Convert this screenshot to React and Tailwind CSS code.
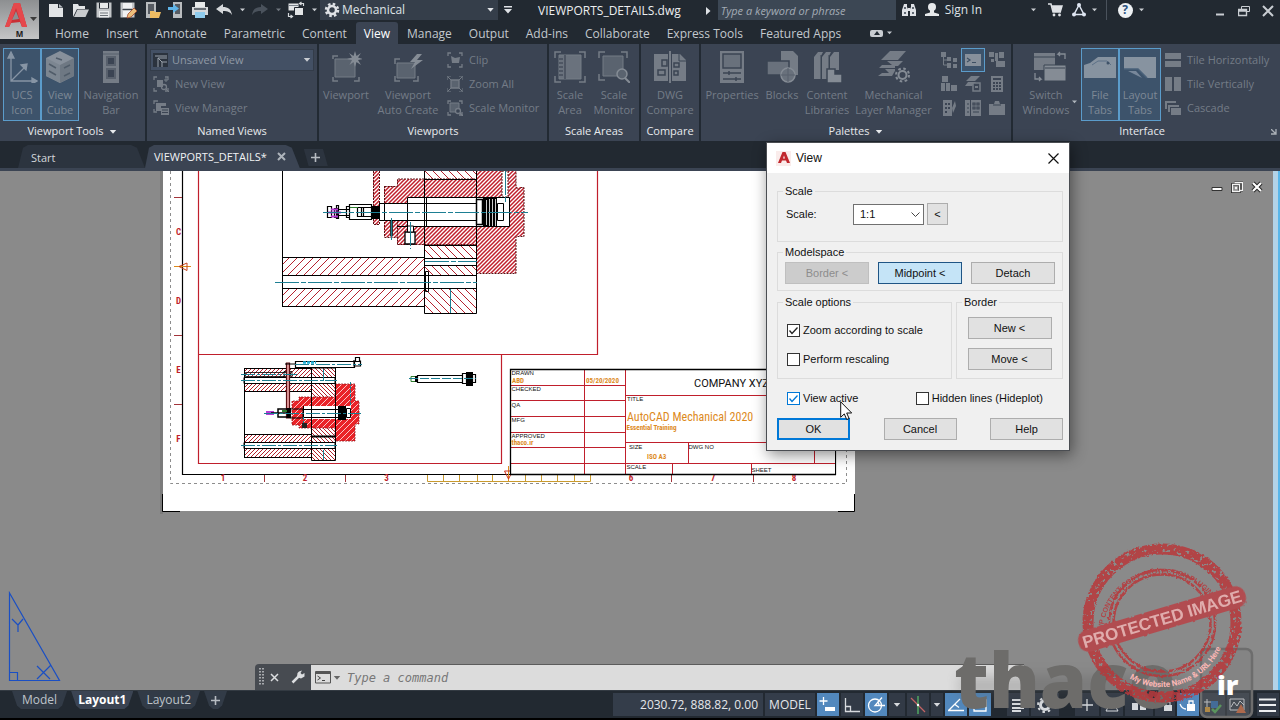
import React from "react";

const ui = "font-['Open_Sans','Noto_Sans',sans-serif]";

function Caret({ className = "w-[8px]" }) {
  return (
    <svg viewBox="0 0 8 5" className={"h-[4px] shrink-0 " + className} aria-hidden="true">
      <path d="M0 0h8L4 4.6z" fill="currentColor" />
    </svg>
  );
}

function Svg({ size = "h-8 w-8", box = "0 0 32 32", children, className = "" }) {
  return (
    <svg viewBox={box} className={"shrink-0 " + size + " " + className} fill="none" stroke="none" aria-hidden="true">
      {children}
    </svg>
  );
}

/* ---------- quick access toolbar ---------- */

const quick = [
  ["New", <g key="a"><path d="M2 3h9v4h5v9H2z" fill="#e2e4e6" /><path d="M12 3l4 3.500h-4z" fill="#b9bdc2" /></g>],
  ["Open", <g key="b"><path d="M2 16V3h5l1 2h6v3H6z" fill="#e2e4e6" /><path d="M6.500 8.500H18L14.500 16H3z" fill="#c9cccf" /></g>],
  ["Save", <g key="c"><path d="M1.500 1.500h15v15h-15z" fill="#c3c6c9" /><path d="M4 1.500h10v6H4z" fill="#20262e" /><path d="M5 2h8v5H5zM4 10h10v6.500H4z" fill="#e8eaeb" /><path d="M5 12h8M5 14.500h8" stroke="#6c7278" /></g>],
  ["Save As", <g key="d"><path d="M1.500 1.500h14v15h-14z" fill="#c3c6c9" /><path d="M4 2h9v5H4zM4 10h9v6H4z" fill="#f0f1f2" /><path d="M3.500 8.500h11" stroke="#3a414a" /><path d="M8 17l1-4 6-6 3 3-6 6z" fill="#eec07c" stroke="#a3472d" strokeWidth=".8" /></g>],
  ["Open from mobile", <g key="e"><path d="M3 1h10v16H3z" fill="#b9bcbf" /><path d="M5 3h6v10H5z" fill="#565b62" /><path d="M7 10h4l1 1h6l-2 6H7z" fill="#f0bd62" /></g>],
  ["Save to mobile", <g key="f"><path d="M6 1h9v16H6z" fill="#b9bcbf" /><path d="M8 3h5v10H8z" fill="#565b62" /><path d="M1 6h5V3l6 4.500L6 12V9H1z" fill="#5fb4e8" /></g>],
  ["Plot", <g key="g"><path d="M4 1h10v5H4z" fill="#e8eaeb" /><path d="M1 6h16v8H1z" fill="#d4d7da" /><path d="M3 8h12" stroke="#444b53" strokeWidth="1.500" /><path d="M4 11h10v6H4z" fill="#8ecbed" /></g>],
  ["Undo", <path key="h" d="M1 8l7-5v3c5 0 8 2 9 8-2-3-4-4-9-4v3z" fill="#d6d9dc" />],
];

function QuickButton({ label, children, width = "w-6 justify-center" }) {
  return (
    <button type="button" aria-label={label} className={"flex h-5 shrink-0 items-center text-[#c9cdd2] " + width}>
      {children}
    </button>
  );
}

function TitleBar() {
  return (
    <div className="flex h-[22px] items-start text-[12px]">
      <div className="flex shrink-0">
        {quick.map(([label, art]) => (
          <QuickButton key={label} label={label}>
            <Svg size="h-[18px] w-[18px]" box="0 0 18 18">{art}</Svg>
          </QuickButton>
        ))}
        <QuickButton label="Undo list" width="w-3 justify-center"><Caret className="w-[5px]" /></QuickButton>
        <QuickButton label="Redo">
          <Svg size="h-[18px] w-[18px]" box="0 0 18 18"><path d="M17 8l-7-5v3c-5 0-8 2-9 8 2-3 4-4 9-4v3z" fill="#4a525c" /></Svg>
        </QuickButton>
        <QuickButton label="Redo list" width="w-3 justify-center"><Caret className="w-[5px] text-[#70777f]" /></QuickButton>
        <QuickButton label="Viewport configuration">
          <Svg size="h-[18px] w-[18px]" box="0 0 18 18">
            <path d="M1.500 2.500h10v7h-10z" fill="#e2e4e6" />
            <path d="M1.500 4.500h10" stroke="#7a828b" />
            <path d="M7.500 6.500h9v8h-9z" fill="#e2e4e6" stroke="#20262e" />
            <path d="M13 2.500h3.500V5M14.500 1l-2 1.500 2 1.500M1.500 12v3.500H5M3.500 14l2 1.500-2 1.500" stroke="#d6d9dc" strokeWidth="1.200" />
          </Svg>
        </QuickButton>
        <QuickButton label="More configurations" width="w-3 justify-center"><Caret className="w-[5px]" /></QuickButton>
      </div>
      <div className="relative flex h-5 w-[178px] shrink-0 items-center bg-[#353e4a] pl-1 text-[#dfe2e6]">
        <Svg size="h-4 w-4" box="0 0 16 16">
          <circle cx="8" cy="8" r="6" stroke="#dfe2e6" strokeWidth="2.500" strokeDasharray="2.500 2.210" />
          <circle cx="8" cy="8" r="4" stroke="#dfe2e6" strokeWidth="2.500" />
        </Svg>
        <select aria-label="Workspace" className="h-5 min-w-0 flex-1 appearance-none bg-transparent pl-[2px] text-[12px] outline-none">
          <option>Mechanical</option>
        </select>
        <Caret className="pointer-events-none absolute top-2 right-1 w-[7px]" />
      </div>
      <button type="button" aria-label="Customize toolbar" className="flex h-5 w-5 shrink-0 items-center justify-center text-[#dfe2e6]">
        <Svg size="h-2 w-2" box="0 0 8 8"><path d="M0 0h8v1.500H0zM0 3h8L4 7.500z" fill="currentColor" /></Svg>
      </button>
      <div className="flex min-w-0 flex-1 items-center justify-end">
        <h1 className="flex-1 pl-5 leading-[22px] whitespace-nowrap text-[#eceef0]">VIEWPORTS_DETAILS.dwg</h1>
        <Svg size="h-2 w-[5px]" box="0 0 5 8" className="mr-[7px]"><path d="M0 0l4.500 4L0 8z" fill="#dfe2e6" /></Svg>
      </div>
      <input aria-label="Search" placeholder="Type a keyword or phrase" className="h-5 w-[178px] shrink-0 bg-[#3c4754] pl-[3px] text-[11px] italic text-white outline-none placeholder:text-[#a3abb5]" />
      <div className="flex h-5 shrink-0 items-center text-[#dfe2e6]">
        <QuickButton label="Find" width="w-[26px] justify-center">
          <Svg size="h-4 w-4" box="0 0 16 16">
            <path d="M3 2h3v3l1 2v7H1V8zM10 2h3l2 6v6H9V7l1-2zM7 6h2v3H7z" fill="#dfe2e6" />
            <path d="M3 11h2M11 11h2M3 6h2M11 6h2" stroke="#39424e" strokeWidth="1.300" />
          </Svg>
        </QuickButton>
        <button type="button" className="flex items-center gap-[5px] pl-[2px] leading-[22px] whitespace-nowrap">
          <Svg size="h-4 w-4" box="0 0 16 16"><circle cx="8" cy="5" r="4" fill="#e6e8ea" /><path d="M6 8h4v2.500l5 1.500v2H1v-2l5-1.500z" fill="#e6e8ea" /></Svg>
          Sign In
        </button>
        <QuickButton label="Account menu" width="w-[60px] justify-end pr-[6px]"><Caret className="w-[5px]" /></QuickButton>
        <QuickButton label="App store" width="w-[26px] justify-center">
          <Svg size="h-4 w-4" box="0 0 16 16"><path d="M1 2h3l2 8h8M4.500 4H15l-1.500 5H6z" stroke="#dfe2e6" strokeWidth="1.500" /><path d="M5 4h10l-1.500 5H6z" fill="#dfe2e6" /><circle cx="7" cy="13" r="1.400" fill="#dfe2e6" /><circle cx="12.500" cy="13" r="1.400" fill="#dfe2e6" /></Svg>
        </QuickButton>
        <QuickButton label="Connect" width="w-[22px] justify-center">
          <Svg size="h-4 w-4" box="0 0 16 16"><path d="M8 3l5 9.500H3z" stroke="#dfe6f2" strokeWidth="1.500" /><circle cx="8" cy="3" r="2" fill="#dfe6f2" /><circle cx="3" cy="12.500" r="2" fill="#dfe6f2" /><circle cx="13" cy="12.500" r="2" fill="#dfe6f2" /></Svg>
        </QuickButton>
        <QuickButton label="Connect menu" width="w-2 justify-center"><Caret className="w-[5px]" /></QuickButton>
        <div className="mr-[6px] ml-2 h-5 w-px bg-[#4a525c]" />
        <QuickButton label="Help" width="w-[24px] justify-center">
          <span className="flex h-[15px] w-[15px] items-center justify-center rounded-full bg-[#eef1f4] text-[12px] font-bold text-[#2a5080]">?</span>
        </QuickButton>
        <QuickButton label="Help menu" width="w-2 justify-center"><Caret className="w-[5px]" /></QuickButton>
      </div>
      <div className="ml-[63px] flex h-[22px] shrink-0 items-center">
        <QuickButton label="Minimize"><Svg size="h-3 w-3" box="0 0 12 12"><path d="M2 9.500h8" stroke="currentColor" strokeWidth="2" /></Svg></QuickButton>
        <QuickButton label="Restore"><Svg size="h-3 w-3" box="0 0 12 12"><path d="M3.500 4V1.500h8v5H9" stroke="currentColor" /><path d="M.5 4.500h8v6h-8zM.5 6h8" stroke="currentColor" strokeWidth="1.400" /></Svg></QuickButton>
        <QuickButton label="Close"><Svg size="h-3 w-3" box="0 0 12 12"><path d="M1 1l10 10M11 1L1 11" stroke="currentColor" strokeWidth="2" /></Svg></QuickButton>
      </div>
    </div>
  );
}

const menus = ["Home", "Insert", "Annotate", "Parametric", "Content", "View", "Manage", "Output", "Add-ins", "Collaborate", "Express Tools", "Featured Apps"];

function MenuTabs() {
  return (
    <nav className="flex h-[22px] items-stretch gap-px pl-[3px] text-[12px] leading-[24px]">
      {menus.map((m) => (
        <button key={m} type="button" className={"px-2 whitespace-nowrap " + (m === "View" ? "rounded-t-[3px] bg-[#3b4453] text-white" : "text-[#c3c8ce]")}>
          {m}
        </button>
      ))}
      <button type="button" aria-label="Ribbon display" className="ml-5 flex items-center gap-1 text-[#c3c8ce]">
        <span className="flex h-[7px] w-[13px] items-center justify-center rounded-[2px] bg-[#c9cdd2]">
          <Svg size="h-[4px] w-[6px]" box="0 0 6 4"><path d="M0 4l3-4 3 4z" fill="#222a33" /></Svg>
        </span>
        <Caret className="w-[5px]" />
      </button>
    </nav>
  );
}

function AppButton() {
  return (
    <button type="button" aria-label="Application menu" className="flex h-[39px] w-[39px] shrink-0 bg-gradient-to-b from-[#8d8f91] to-[#c4c5c6]">
      <Svg size="h-[39px] w-[39px]" box="0 0 39 39">
        <path d="M5 27L14 3h6l7 24h-5l-2-5-9 1-2 4z" fill="#c92f35" />
        <path d="M14 3h6l7 24h-5L16 8l-5 15-2 4H5z" fill="#e5484c" />
        <path d="M12 20l4-9 3 8z" fill="#8d8f91" />
        <path d="M30 17h7l-3.500 4z" fill="#3b3b3b" />
        <text x="19.500" y="37" textAnchor="middle" fontSize="8" fontWeight="700" fill="#1b1b1b" fontFamily="Open Sans">M</text>
      </Svg>
    </button>
  );
}

/* ---------- ribbon ---------- */

const F = "#757c86";
const D = "#3b4453";

const art = {
  ucs: <g stroke="#8795a5" strokeWidth="1.300"><path d="M5 3v27h25M5 30L20 15" /><path d="M2 7l3-6 3 6zM26 27l5 3-5 3zM15 14l6-1-1 6z" fill="#8795a5" /></g>,
  cube: <g><path d="M16 0l14 7v18l-14 7L2 25V7z" fill="#87909b" /><path d="M16 14l14-7v18l-14 7z" fill="#6e7883" /><path d="M2 7l14 7v18L2 25z" fill="#7c8691" /><path d="M12 7l6 2M5 13l7 4M20 17l6-3M5 20l7 4M20 25l6-3" stroke="#505c69" strokeWidth="1.500" /></g>,
  nav: <g><path d="M8 0h16v32H8z" fill={F} /><path d="M12 6h8v8h-8zM12 18h8v9h-8z" fill={D} stroke="#59616d" strokeWidth="2" /><path d="M8 3h16" stroke="#59616d" /></g>,
  viewport: <g><path d="M5 8h20v18H5z" fill="#5a636f" stroke={F} /><path d="M3 8V5h5M3 26v4h5M29 26v4h-5" stroke={F} strokeWidth="1.500" /><path d="M25 0l1.500 5L31 2l-3 4.500 5 1.500-5 1 3 5-4.500-3-1.500 5-1.500-5-4 3 2.500-5-5-1 5-1.500-3-4.500 4.500 3z" fill="#858c95" /></g>,
  auto: <g><path d="M5 12h18v15H5z" fill="#5a636f" stroke={F} /><path d="M3 13V8h5M3 25v5h5M26 25v5h-5" stroke={F} strokeWidth="1.500" /><path d="M25 3l-7 8h5l-4 7 12-9h-6l5-6z" fill="#858c95" /></g>,
  scaleArea: <g><path d="M5 4h22v24H5z" fill="#6a727d" stroke={F} /><path d="M11 4v24M5 8h4M5 12h4M5 16h4M5 20h4M5 24h4" stroke="#454e5b" strokeWidth="1.500" /><path d="M1 7V1h6M25 1h6v6M1 25v6h6M31 25v6h-6" stroke={F} strokeWidth="1.500" /></g>,
  scaleMon: <g><path d="M5 5h20v20H5z" fill="#5a636f" stroke={F} /><path d="M1 7V1h6M23 1h6v6M1 23v6h6" stroke={F} strokeWidth="1.500" /><circle cx="24" cy="23" r="5" fill="#5a636f" stroke="#858c95" strokeWidth="1.500" /><path d="M27 27l5 5" stroke="#858c95" strokeWidth="2" /></g>,
  dwg: <g><path d="M0 3h14v27H0zM18 3h8l6 6v21H18z" fill={F} /><path d="M16 0v32" stroke={F} strokeWidth="2" /><path d="M8 9h5v6H8zM4 19h7v5H4zM20 12h5v4h-5zM20 20h4v4h-4z" fill={F} stroke={D} strokeWidth="1.500" /><path d="M25 3v7h7" stroke={D} /></g>,
  props: <g><path d="M4 0h24v32H4z" fill={F} /><path d="M7 3h18v14H7z" fill="#69717c" stroke={D} strokeWidth="1.500" /><path d="M7 22h18M7 28h18M13 20v4M20 26v4" stroke={D} strokeWidth="1.500" /></g>,
  blocks: <g><path d="M15 0h12l5 5v19H15z" fill={F} /><path d="M1 10h22v14H1z" fill="#69717c" stroke={D} strokeWidth="1.500" /><circle cx="22" cy="24" r="7" fill="#69717c" stroke="#858c95" strokeWidth="1.500" /><path d="M15 24h14M22 17v14" stroke="#59616d" /></g>,
  libs: <g><path d="M3 6l4-5h5l-2 4v23H3zM11 6l4-5h5l-2 4v23h-7z" fill={F} /><path d="M19 6l4-5h5v18h-9z" fill={F} /><path d="M10 4v24M18 4v24" stroke={D} /><path d="M16 18h8v5h7v9H16z" fill="#858c95" stroke={D} strokeWidth="1.500" /></g>,
  layer: <g><path d="M12 0h16l-8 9H3z" fill={F} /><path d="M9 10h16l-7 7H1l3-3h10z" fill={F} /><path d="M7 18h11l-4 7H0l4-3h7z" fill={F} /><path d="M17 15h15v17H17z" fill={D} /><circle cx="24.500" cy="24" r="4" stroke="#858c95" strokeWidth="2" /><circle cx="24.500" cy="24" r="6.500" stroke="#858c95" strokeWidth="2" strokeDasharray="2.600 2.500" /></g>,
  sw: <g><path d="M0 2h21v17H0z" fill={F} /><path d="M10 14h22v16H10z" fill="#858c95" stroke={D} /><path d="M0 6h21M11 17h20" stroke={D} /><path d="M31 8V3h-7l2-2m-2 2l2 2M1 22v6h6l-2-2m2 2l-2 2" stroke="#858c95" strokeWidth="1.300" /></g>,
  fileTab: <g><path d="M0 14l6-2 8-6h18v21H0z" fill="#8793a0" /><path d="M8 14l6-4h9l4 4" stroke="#5d7187" /><circle cx="24" cy="12" r="1.500" fill="#3f5268" /></g>,
  layTab: <g><path d="M0 6h32v21h-9l-9-9H0z" fill="#8793a0" /><path d="M0 18h14l9 9" stroke="#4a617a" strokeWidth="1.500" /><path d="M4 20h8l6 7" fill="#78879a" /></g>,
};

function Big({ icon, lines, width, on, menu }) {
  return (
    <button type="button" className={"flex h-[73px] shrink-0 flex-col items-center gap-[4px] pt-[2px] text-[11px] leading-[15px] whitespace-nowrap " + width + " " + (on ? "border border-[#5b9ccb] bg-[#3d536b] text-[#7d8996]" : "border border-transparent text-[#747c87]")}>
      <Svg>{art[icon]}</Svg>
      <span className="flex items-center">
        <span>
          {lines.map((l) => (
            <span key={l} className="block">{l}</span>
          ))}
        </span>
        {menu && <Caret className="ml-[3px] w-[5px] text-[#b0b6bd]" />}
      </span>
    </button>
  );
}

function Small({ label, children }) {
  return (
    <button type="button" className="flex h-6 items-center gap-[6px] text-[11px] whitespace-nowrap text-[#747c87]">
      <Svg size="h-4 w-4" box="0 0 16 16">{children}</Svg>
      {label}
    </button>
  );
}

function Panel({ title, width, children, menu, launcher, inner = "" }) {
  return (
    <section className={"flex flex-col border-[#222a33] bg-[#3b4453] " + width}>
      <div className={"flex h-[78px] items-start pt-1 " + inner}>{children}</div>
      <div className="flex h-[19px] items-center text-[11px] text-[#e8eaed]">
        <h2 className="flex flex-1 items-center justify-center gap-[6px] whitespace-nowrap">
          {title}
          {menu && <Caret />}
        </h2>
        {launcher && (
          <button type="button" aria-label={title + " options"}>
            <Svg size="h-[6px] w-[6px]" box="0 0 6 6" className="mr-[3px]"><path d="M0 0l5 5M5 0v5H0" stroke="#aab0b7" strokeWidth="1.300" /></Svg>
          </button>
        )}
      </div>
    </section>
  );
}

const brackets = <path d="M1 4V1h3M12 1h3v3M1 12v3h3M15 12v3h-3" stroke={F} strokeWidth="1.300" />;

const palettes = [
  ["Tool palettes", <g key="p"><path d="M0 0h5v5H0zM6 5h4v4H6zM6 11h4v5H6zM12 6h4v4h-4zM12 12h4v4h-4z" fill={F} /><path d="M2.500 5v8h4M2.500 8h4" stroke={F} /></g>],
  ["Command line", <g key="p"><path d="M0 2h16v12H0z" fill="#87909b" /><path d="M2 6l3 2-3 2M7 10.500h4" stroke="#3d4f63" strokeWidth="1.200" /></g>],
  ["Sheet set", <path key="p" d="M0 0h5v5H0zM6 1h3v8H6zM10 0h5v6h-5zM7 9h9v6H7zM2 7h3v3H2z" fill={F} />],
  ["Design center", <path key="p" d="M1 0h6v6H1zM0 7h4v8H0zM5 7h4v8H5zM10 9h6v6h-6z" fill={F} />],
  ["Layer states", <g key="p"><path d="M6 0h9l-5 5H1zM3 6h8l-4 4H0z" fill={F} /><path d="M8 7h7v8H8z" fill={D} stroke={F} strokeWidth="1.500" /><path d="M10 10h3v2h-3z" fill={F} /></g>],
  ["Calculator", <g key="p"><path d="M2 0h12v16H2z" fill={F} /><path d="M4 2h8v2H4zM4 6h2v2H4zM7 6h2v2H7zM10 6h2v2h-2zM4 9h2v2H4zM7 9h2v2H7zM10 9h2v2h-2zM4 12h2v2H4zM7 12h2v2H7zM10 12h2v2h-2z" fill={D} /></g>],
  ["Markup", <g key="p"><path d="M2 0h9v16H2z" fill={F} /><path d="M4 3h2v2H4zM7 3h2v2H7zM4 7h2v2H4zM7 7h2v2H7zM4 11h2v2H4z" fill={D} /><path d="M14 1l-3 7 1 5 3-7z" fill={F} /></g>],
  ["Parts list", <g key="p"><path d="M0 0h5v16H0zM6 0h10v16H6z" fill={F} /><path d="M2 4h2M2 8h2M2 12h2M8 3h2v2H8zM12 3h2v2h-2zM8 7h2v2H8zM12 7h2v2h-2zM8 12h6" stroke={D} strokeWidth="1.200" /></g>],
  ["Clipboard", <g key="p"><path d="M0 4h5l1-3h4l1 3h5v11H0z" fill={F} /><path d="M4 5h8" stroke={D} /></g>],
];

const edge = "border-r-2 shrink-0 ";

function Ribbon() {
  return (
    <div className="flex h-[97px] bg-[#3b4453]">
      <Panel title="Viewport Tools" width={edge + "w-[147px]"} inner="pl-[3px]" menu>
        <Big icon="ucs" lines={["UCS", "Icon"]} width="w-[38px]" on />
        <Big icon="cube" lines={["View", "Cube"]} width="w-[38px]" on />
        <Big icon="nav" lines={["Navigation", "Bar"]} width="w-[64px]" />
      </Panel>
      <Panel title="Named Views" width={edge + "w-[172px]"} inner="flex-col pl-[3px] pr-[3px]">
        <div className="relative flex h-6 w-full items-start">
          <div className="mt-[1px] flex h-[22px] w-full items-center border border-[#333c49] bg-[#435064] pl-[2px] text-[#9099a4]">
            <Svg size="h-4 w-4" box="0 0 16 16"><path d="M0 1h15v14H0z" fill="#2b333e" /><path d="M2 4h12M5 15V6h9M5 6l4 4h5M9 10v5" stroke="#9aa2ab" /></Svg>
            <select aria-label="Saved view" className="h-5 min-w-0 flex-1 appearance-none bg-transparent pl-[3px] text-[11px] outline-none"><option>Unsaved View</option></select>
          </div>
          <Caret className="pointer-events-none absolute top-[10px] right-[3px] w-[8px] text-[#c9cdd2]" />
        </div>
        <div className="pl-[3px]">
          <Small label="New View">{brackets}<path d="M4 4h6v7H4z" fill={F} /><circle cx="11" cy="11" r="2.500" stroke={F} strokeWidth="1.300" /><path d="M13 2v4M11 4h4M13 13l3 3" stroke={F} /></Small>
          <Small label="View Manager"><path d="M1 4V1h4M1 9v3h3" stroke={F} strokeWidth="1.300" /><path d="M3 3h10v3H8v5H3z" fill={F} /><path d="M8 8h8v7H8z" fill={F} /><path d="M9 10h6M9 12.500h6" stroke={D} /></Small>
        </div>
      </Panel>
      <Panel title="Viewports" width={edge + "w-[230px]"}>
        <Big icon="viewport" lines={["Viewport"]} width="w-[54px]" />
        <Big icon="auto" lines={["Viewport", "Auto Create"]} width="w-[70px]" />
        <div className="pl-1">
          <Small label="Clip">{brackets}<path d="M4 4l4 2 5-1-1 6H5z" fill={F} /></Small>
          <Small label="Zoom All"><path d="M4 4h8v8H4z" fill="#5a636f" stroke={F} strokeWidth="1.300" /><path d="M1 1l3 3M15 1l-3 3M1 15l3-3M15 15l-3-3M0 4V0h4M12 0h4v4M0 12v4h4M16 12v4h-4" stroke={F} /></Small>
          <Small label="Scale Monitor">{brackets}<path d="M3 3h9v9H3z" fill="#5a636f" stroke={F} /><circle cx="11" cy="11" r="2.500" fill={D} stroke={F} strokeWidth="1.300" /><path d="M13 13l3 3" stroke={F} strokeWidth="1.500" /></Small>
        </div>
      </Panel>
      <Panel title="Scale Areas" width={edge + "w-[92px]"}>
        <Big icon="scaleArea" lines={["Scale", "Area"]} width="w-[42px]" />
        <Big icon="scaleMon" lines={["Scale", "Monitor"]} width="w-[46px]" />
      </Panel>
      <Panel title="Compare" width={edge + "w-[60px]"}>
        <Big icon="dwg" lines={["DWG", "Compare"]} width="w-[58px]" />
      </Panel>
      <Panel title="Palettes" width={edge + "w-[312px]"} inner="pl-[3px]" menu>
        <Big icon="props" lines={["Properties"]} width="w-[56px]" />
        <Big icon="blocks" lines={["Blocks"]} width="w-[44px]" />
        <Big icon="libs" lines={["Content", "Libraries"]} width="w-[46px]" />
        <Big icon="layer" lines={["Mechanical", "Layer Manager"]} width="w-[87px]" />
        <div className="grid grid-cols-3">
          {palettes.map(([label, g]) => (
            <button key={label} type="button" aria-label={label} className={"flex h-6 w-6 items-center justify-center " + (label === "Command line" ? "border border-[#5b9ccb] bg-[#3d536b]" : "")}>
              <Svg size="h-4 w-4" box="0 0 16 16">{g}</Svg>
            </button>
          ))}
        </div>
      </Panel>
      <Panel title="Interface" width="min-w-0 flex-1" inner="pl-[6px]" launcher>
        <Big icon="sw" lines={["Switch", "Windows"]} width="w-[62px]" menu />
        <Big icon="fileTab" lines={["File", "Tabs"]} width="w-[38px]" on />
        <Big icon="layTab" lines={["Layout", "Tabs"]} width="w-[42px]" on />
        <div className="pl-1">
          <Small label="Tile Horizontally"><path d="M0 1h16v6H0zM0 9h16v6H0z" fill={F} /></Small>
          <Small label="Tile Vertically"><path d="M0 1h7v14H0zM9 1h7v14H9z" fill={F} /></Small>
          <Small label="Cascade"><path d="M0 1h11v2H2v6H0zM3 5h11v2H5v5H3z" fill={F} /><path d="M6 8h10v7H6z" fill={F} /></Small>
        </div>
      </Panel>
    </div>
  );
}

function FileTabs() {
  return (
    <div className="flex h-[30px] flex-col bg-[#222931] pt-1">
      <div className="flex h-[23px] items-stretch pl-[18px] text-[11px] leading-[25px]">
        <button type="button" className="w-[127px] bg-[#2c343f] pl-[13px] text-left text-[#d3d7dc] [clip-path:polygon(0_100%,5px_12%,10px_0,113px_0,119px_12%,100%_100%)]">Start</button>
        <div className="flex items-center gap-[10px] bg-[#3b4453] pr-[14px] pl-[9px] text-[#f0f2f4] [clip-path:polygon(0_100%,4px_12%,9px_0,calc(100%-14px)_0,calc(100%-8px)_12%,100%_100%)]">
          <button type="button">VIEWPORTS_DETAILS*</button>
          <button type="button" aria-label="Close tab"><Svg size="h-[9px] w-[9px]" box="0 0 9 9"><path d="M1 1l7 7M8 1L1 8" stroke="#aeb4bb" strokeWidth="2" /></Svg></button>
        </div>
        <button type="button" aria-label="New tab" className="mt-1 ml-1 flex h-[17px] w-[24px] items-center justify-center bg-[#2c343f] [clip-path:polygon(0_0,80%_0,100%_100%,20%_100%)]">
          <Svg size="h-[9px] w-[9px]" box="0 0 9 9"><path d="M4.500 0v9M0 4.500h9" stroke="#b7bcc2" strokeWidth="1.600" /></Svg>
        </button>
      </div>
      <div className="h-[3px] bg-[#3b4453]" />
    </div>
  );
}

/* ---------- drawing sheet ---------- */

const R = "#c01f2c";
const T = "#1d7f93";
const O = "#dd8a1c";
const narrow = "Roboto Condensed, Roboto, sans-serif";

/* Diagonal strokes clipped to a rectangle; "/" by default, "\" with back. */
function Lines({ id, x, y, w, h, gap, back }) {
  const parts = [];
  for (let i = -h; i < w; i += gap) {
    parts.push(back ? `M${x + i} ${y}l${h} ${h}` : `M${x + i} ${y + h}l${h} ${-h}`);
  }
  return (
    <g>
      <clipPath id={id}>
        <rect x={x} y={y} width={w} height={h} />
      </clipPath>
      <path d={parts.join("")} stroke="#b5222e" clipPath={`url(#${id})`} />
    </g>
  );
}

function Hatch({ id, size, width = 1, color = R }) {
  return (
    <pattern id={id} width={size} height={size} patternUnits="userSpaceOnUse">
      <path
        d={`M0 ${size}L${size} 0M-1 1L1 -1M${size - 1} ${size + 1}L${size + 1} ${size - 1}`}
        stroke={color}
        strokeWidth={width}
        fill="none"
      />
    </pattern>
  );
}

const plates = [
  ["p1", 282, 257, 142, 18, 8], ["p2", 282, 288, 142, 18, 8],
  ["p3", 425, 171, 52, 8, 8, true], ["p4", 425, 245, 52, 13, 8, true], ["p5", 425, 265, 52, 10, 8, true], ["p6", 425, 288, 52, 25, 8, true],
];

const smallPlates = [
  ["s1", 244, 368, 67, 9, 4], ["s2", 244, 384, 67, 7, 4], ["s3", 244, 435, 67, 7, 4], ["s4", 244, 448, 67, 9, 4],
  ["s5", 311, 368, 24, 92, 4, true],
];

function Sheet() {
  return (
    <svg viewBox="160 171 698 343" className="absolute top-0 left-[160px] h-[343px] w-[698px]" fill="none" role="img" aria-label="Layout sheet">
      <defs>
        <Hatch id="hatch-dense" size={4} width={1.5} />
        <Hatch id="hatch-light" size={6} width={1} color="#fff" />
      </defs>
      <path d="M160 171h3v343h-3z" fill="#7b7b7b" />
      <path d="M163 171h692v340H163z" fill="#fff" />
      <path d="M162.500 494v17.500H180M838 511.500h16.500V494" stroke="#000" />
      <path d="M170.500 171v312.500h676V171" stroke="#8d8d8d" strokeDasharray="3 3" />
      <path d="M182.500 171v303.500h653V171" stroke="#000" strokeWidth="1.200" />
      <path d="M174 197.500h8M174 335.500h8M174 404.500h8M264.500 475v7M345.500 475v7M671.500 475v7M753.500 475v7" stroke="#a3343a" />
      <path d="M198.500 171v292.500h303V354.500M198.500 354.500H597.500V171" stroke={R} strokeWidth="1.200" />
      <path d="M174 266.500h17" stroke={O} />
      <path d="M187 263v7.500l-8-4z" stroke="#c5451c" />
      <path d="M508.500 466v16" stroke={O} />
      <path d="M504.500 471h8l-4 8z" stroke="#d0301c" />
      <path d="M427.500 475v6.500h163V475M443.500 475v6M459.500 475v6M477.500 475v6M492.500 475v6M525.500 475v6M541.500 475v6M557.500 475v6M574.500 475v6" stroke="#c99a2e" />
      <g fill={R} fontFamily={narrow} fontSize="9" fontWeight="700" textAnchor="middle">
        <text x="178.500" y="235">C</text><text x="178.500" y="304">D</text><text x="178.500" y="373">E</text><text x="178.500" y="442">F</text>
        <text x="223" y="481">1</text><text x="305" y="481">2</text><text x="386.500" y="481">3</text>
        <text x="631" y="481">6</text><text x="713" y="481">7</text><text x="794" y="481">8</text>
      </g>

      {/* main assembly */}
      {plates.map(([id, x, y, w, h, gap, back]) => (
        <Lines key={id} id={id} x={x} y={y} w={w} h={h} gap={gap} back={back} />
      ))}
      <path d="M397 179h80v18h-80zM397 226h80v19h-80zM384 186h13v18h-13zM384 220h13v17h-13zM397 197h10v7h-10zM397 220h10v7h-10zM476 171h40v16h8v49h-8v37h-40zM373 171h6v54h-6z" fill="url(#hatch-dense)" />
      <path d="M397.500 244.500V220M384.500 237.500h13M384.500 186v51M384.500 186.500h13v-7.500h79M397.500 244.500h79M476.500 273.500h39.500v-37h8v-49h-3l-2 2-3-2V171M373.500 171v53.500h6V171" stroke="#5a1015" strokeDasharray="2 1" />
      <path d="M407 197h102v29H407z" fill="#fff" />
      <path d="M502 171h6v26h-6z" fill="#fff" stroke="#5a1015" strokeDasharray="2 1" />
      <path d="M282.500 171v135.500M282 257.500h142M282 275.500h195M282 288.500h195M282 306.500h142M424.500 171v142.500h52V171M424.500 179.500h52M424.500 245.500h52M424.500 258.500h52M424.500 265.500h52M425.500 271.500h3v20h-3z" stroke="#000" />
      <path d="M407.500 226V197.500H509.500V226.500H397M379 203.500h97M379 220.500h97M424.500 197v29M426.500 197v29" stroke="#000" />
      <path d="M476.500 199.500h6v25h-6z" stroke="#000" strokeWidth="1.500" />
      <path d="M483 198h14v29h-14z" fill="#000" />
      <path d="M486.500 200v25M489.500 199v27M492.500 199v27M495.500 199v27" stroke="#fff" strokeWidth=".8" />
      <path d="M497.500 203.500h6v17h-6z" stroke="#000" />
      <path d="M405 232h10v12h-10z" fill="#fff" stroke="#000" strokeWidth="1.300" />
      <path d="M407.500 226h6v6h-6z" fill="#fff" stroke="#000" />
      <path d="M327.500 206.500h4v11h-4zM334.500 208.500h3v9h-3zM336.500 205.500h2v13h-2zM339 209.500h10M339 215.500h10M346.500 206.500h3v11h-3zM349.500 204.500h22v15h-22zM357.500 207.500h14v9h-14zM361.500 207.500v9M363.500 207.500v9" stroke="#000" strokeWidth="1.200" />
      <path d="M350 207.500h8" stroke="#2d7d2d" />
      <path d="M328 212.500h13M331 216.500h7M331 209.500h7" stroke="#b63bd6" strokeWidth="1.800" />
      <path d="M372 206h7v13h-7z" fill="#000" />
      <path d="M379.500 203.500h5v17h-5z" fill="#fff" stroke="#000" />
      <path d="M323 212.500h205M275 282.500h202M425 261.500h52M450.500 289v24M410.500 222v27M391.500 218v22M505.500 171v31" stroke={T} strokeDasharray="24 2 5 2" />
      <path d="M390.500 221v15M392.500 221v15" stroke="#333" />

      {/* scaled copy */}
      {smallPlates.map(([id, x, y, w, h, gap, back]) => (
        <Lines key={id} id={id} x={x} y={y} w={w} h={h} gap={gap} back={back} />
      ))}
      <path d="M335 384h20v17h4v23h-4v17h-20v-13h-36v-3h-7v-24h7v-4h36z" fill="#ea2328" />
      <path d="M335 384h20v17h4v23h-4v17h-20v-13h-36v-3h-7v-24h7v-4h36z" fill="url(#hatch-light)" stroke="#8e151a" strokeDasharray="2 1" opacity=".75" />
      <path d="M303 406h48v13h-48z" fill="#fff" />
      <path d="M245 378h90v5h-90zM245 443h90v5h-90z" fill="#fff" />
      <path d="M244.500 368v89M244 368.500h67M244 377.500h91v6H244zM244 391.500h67M244 434.500h67M244 442.500h91v6H244zM244 457.500h67M311.500 368v92.500h24V368h-24M303.500 406v13M303 409.500h35M303 417.500h35M290 409h13v9h-13z" stroke="#000" />
      <path d="M245.500 372.500h45v4h-45zM284 371.500h8v6h-8z" stroke="#000" strokeWidth=".8" />
      <path d="M312 436.500h23" stroke="#000" strokeWidth="2" />
      <path d="M338 406h8v14h-8z" fill="#000" />
      <path d="M346.500 408.500h4v9h-4z" fill="#fff" stroke="#000" />
      <path d="M286.500 363v55h3v-55z" fill="#e7a0a2" stroke="#5b0e12" strokeWidth="1.200" />
      <path d="M285 364h10M295.500 361.500h59v6h-59zM354 360v6h6.500v-5.500M355.500 357.500h4v4h-4z" stroke="#000" strokeWidth="1.200" />
      <path d="M303 362.500h13" stroke="#22b4dd" strokeWidth="2.500" strokeDasharray="3 1" />
      <path d="M350.500 382v23M303.500 417v12" stroke={T} strokeDasharray="3 1" />
      <path d="M266 411h8v4h-8z" fill="#b63bd6" />
      <path d="M271 413h20M278 409v8h12v-8z" stroke="#000" strokeWidth="1.500" />
      <path d="M282 410h6v2h-6z" fill="#2d7d2d" />
      <path d="M287 408h4v10h-4z" fill="#000" />
      <path d="M302 423h5v5h-5z" fill="#222" />
      <path d="M264 413.500h97M241 380.500h96M241 445.500h96M241 374.500h56M295 364.500h67M323.500 369v12M323.500 450v10" stroke={T} strokeDasharray="14 2 3 2" />

      {/* detached pin */}
      <path d="M411 376.500h6v5h-6z" stroke="#2d7d2d" fill="#fff" />
      <path d="M415 376h3v6h-3z" fill="#000" />
      <path d="M417.500 375.500h45v7h-45zM462.500 373.500h4v10h-4zM472.500 374.500h3v8h-3z" stroke="#000" strokeWidth="1.200" fill="#fff" />
      <path d="M466 372h7v14h-7z" fill="#000" />
      <path d="M409 378.500h67" stroke={T} strokeDasharray="9 2" />

      {/* title block */}
      <path d="M511 370h324v104H511z" fill="#fff" />
      <path d="M584.500 370v104M625.500 370v104M511 385.500h114M511 400.500h114M511 416.500h114M511 432.500h114M511 447.500h114M511 463.500h324M625 395.500h210M625 442.500h210M688.500 442v21M672.500 463v11M751.500 463v11M814.500 442v21" stroke={R} />
      <path d="M510.500 474V369.500h325M510 474.500h326" stroke="#000" strokeWidth="1.300" />
      <g fill="#111" fontFamily="Liberation Sans" fontSize="6">
        <text x="511.500" y="375">DRAWN</text><text x="511.500" y="391">CHECKED</text><text x="511.500" y="407">QA</text><text x="511.500" y="422">MFG</text><text x="511.500" y="438">APPROVED</text>
        <text x="627" y="401">TITLE</text><text x="629" y="449">SIZE</text><text x="688.500" y="449">DWG NO</text><text x="626.500" y="469">SCALE</text><text x="751.500" y="472">SHEET</text>
      </g>
      <text x="694" y="387" fontSize="11" fill="#111" fontFamily="Roboto">COMPANY XYZ</text>
      <g fill={O} fontFamily={narrow} fontWeight="700" fontSize="7">
        <text x="512" y="383">ABD</text><text x="586" y="383">05/20/2020</text><text x="511.500" y="445">thaco.ir</text>
        <text x="626.500" y="430">Essential Training</text><text x="647" y="459">ISO A3</text>
      </g>
      <text x="627" y="421" fill={O} fontFamily={narrow} fontSize="12">AutoCAD Mechanical 2020</text>
    </svg>
  );
}

/* ---------- dialog ---------- */

const dlgButton = "flex h-[22px] items-center justify-center text-[11px] whitespace-nowrap ";

function Push({ children, width, tone = "border border-[#adadad] bg-[#e1e1e1] text-[#111]", disabled }) {
  return (
    <button type="button" disabled={disabled} className={dlgButton + width + " " + tone}>{children}</button>
  );
}

function Tick({ label, checked, blue }) {
  return (
    <label className="flex items-center gap-[3px] text-[11px] whitespace-nowrap">
      <span className="grid h-[13px] w-[13px] place-items-center">
        <input type="checkbox" defaultChecked={checked} className={"col-start-1 row-start-1 h-[13px] w-[13px] appearance-none border bg-white " + (blue ? "border-[#0078d7]" : "border-[#333]")} />
        {checked && (
          <Svg size="h-[11px] w-[11px]" box="0 0 11 11" className="pointer-events-none col-start-1 row-start-1">
            <path d="M1.500 5.500L4 8.500l5.500-6" stroke={blue ? "#0078d7" : "#222"} strokeWidth="1.300" />
          </Svg>
        )}
      </span>
      {label}
    </label>
  );
}

function Group({ title, className, children }) {
  return (
    <fieldset className={"min-w-0 border border-[#dcdcdc] " + className}>
      <legend className="ml-[5px] px-[2px] text-[11px] leading-[14px]">{title}</legend>
      {children}
    </fieldset>
  );
}

function ViewDialog() {
  return (
    <div role="dialog" aria-label="View" className="absolute top-[142px] left-[766px] flex w-[304px] flex-col border border-[#4a4d52] bg-[#f0f0f0] font-['Liberation_Sans',Arial,sans-serif] text-[#111] shadow-[2px_4px_14px_rgba(0,0,0,0.45)]">
      <div className="flex h-[30px] items-center bg-white pr-[6px] pl-[9px]">
        <span className="flex h-[15px] w-[15px] items-center justify-center bg-[#faeceb]">
          <Svg size="h-[12px] w-[12px]" box="0 0 12 12"><path d="M0 11L4.500 0h3L12 11H9L8 8.500H4L3 11z" fill="#c1272d" /><path d="M5 6.500L6 3.500l1 3z" fill="#faeceb" /></Svg>
        </span>
        <h2 className="flex-1 pl-[5px] text-[12px]">View</h2>
        <button type="button" aria-label="Close dialog" className="p-1">
          <Svg size="h-[11px] w-[11px]" box="0 0 11 11"><path d="M.5.5l10 10M10.500.5l-10 10" stroke="#111" strokeWidth="1.200" /></Svg>
        </button>
      </div>
      <div className="flex flex-col pt-[11px] pr-[6px] pb-[10px] pl-[10px]">
        <Group title="Scale" className="h-[58px]">
          <div className="flex items-center pt-[5px] pl-[8px] text-[11px]">
            <label htmlFor="scale" className="w-[67px]">Scale:</label>
            <div className="relative flex">
              <select id="scale" className="h-[21px] w-[71px] appearance-none border border-[#707070] bg-white pl-[6px] text-[11px]"><option>1:1</option></select>
              <Svg size="h-[6px] w-[9px]" box="0 0 9 6" className="pointer-events-none absolute top-2 right-1"><path d="M.5.5l4 4 4-4" stroke="#444" /></Svg>
            </div>
            <Push width="ml-[3px] w-[21px]">&lt;</Push>
          </div>
        </Group>
        <Group title="Modelspace" className="mt-[3px] h-[46px]">
          <div className="flex justify-between px-[7px] pt-[3px]">
            <Push width="w-[84px]" tone="border border-[#bfbfbf] bg-[#cccccc] text-[#8d8d8d]" disabled>Border &lt;</Push>
            <Push width="w-[84px]" tone="border border-[#1f5585] bg-[#c5e4f7] text-[#111]">Midpoint &lt;</Push>
            <Push width="w-[84px]">Detach</Push>
          </div>
        </Group>
        <div className="mt-[4px] flex gap-[4px]">
          <Group title="Scale options" className="h-[84px] flex-1">
            <div className="flex flex-col items-start gap-[14px] pt-[14px] pl-[9px] leading-[15px]">
              <Tick label="Zoom according to scale" checked />
              <Tick label="Perform rescaling" />
            </div>
          </Group>
          <Group title="Border" className="h-[84px] w-[107px]">
            <div className="flex flex-col items-center gap-[9px] pt-[8px]">
              <Push width="w-[84px]">New &lt;</Push>
              <Push width="w-[84px]">Move &lt;</Push>
            </div>
          </Group>
        </div>
        <div className="mt-[12px] flex justify-between pr-5 pl-[10px] leading-[15px]">
          <Tick label="View active" checked blue />
          <Tick label="Hidden lines (Hideplot)" />
        </div>
        <div className="mt-[12px] flex justify-between">
          <Push width="w-[73px]" tone="border-2 border-[#0078d7] bg-[#e1e1e1] text-[#111]">OK</Push>
          <Push width="w-[73px]">Cancel</Push>
          <Push width="w-[73px]">Help</Push>
        </div>
      </div>
    </div>
  );
}

/* ---------- canvas furniture ---------- */

function McButton({ label, children }) {
  return (
    <button type="button" aria-label={label}>
      <Svg size="h-3 w-3" box="0 0 12 12">{children}</Svg>
    </button>
  );
}

function Workspace() {
  return (
    <main className="relative flex min-h-0 flex-1 flex-col overflow-hidden bg-[#8a8a8a]">
      <Sheet />
      <div className="flex justify-end gap-2 pt-[10px] pr-[17px]">
        <McButton label="Minimize drawing"><path d="M1 6.500h10v3H1z" fill="#fff" stroke="#333" /></McButton>
        <McButton label="Restore drawing"><path d="M3.500 1.500h8v8h-3M.5 3.500h8v8h-8z" stroke="#222" strokeWidth="2.500" /><path d="M3.500 1.500h8v8h-3M1.500 3.500h7v7h-7zM4.500 6.500h1v1h-1z" stroke="#f4f4f4" strokeWidth="1.300" /></McButton>
        <McButton label="Close drawing"><path d="M2 2l8 8M10 2l-8 8" stroke="#222" strokeWidth="4" /><path d="M2 2l8 8M10 2l-8 8" stroke="#fff" strokeWidth="2.200" /></McButton>
      </div>
      <svg viewBox="0 0 60 96" className="absolute bottom-[6px] left-[4px] h-[96px] w-[60px]" fill="none" stroke="#1a4fc4" strokeWidth="1.200" aria-hidden="true">
        <path d="M5.500 5v87.500H55.500zM5.500 84.500h8v8M8 31l6 6 5-6M14 37v7M33 78l13 13M47 77L33 91" />
      </svg>
      <div className="mt-auto mr-[256px] ml-[255px] flex h-[26px] items-stretch rounded-tl bg-[#474b51]">
        <Svg size="h-[18px] w-[5px]" box="0 0 5 18" className="my-auto ml-1"><path d="M1 0v18M4 0v18" stroke="#c6c9cc" strokeWidth="1.500" strokeDasharray="1.500 1.500" /></Svg>
        <button type="button" aria-label="Close command line" className="flex w-5 items-center justify-center"><Svg size="h-[9px] w-[9px]" box="0 0 9 9"><path d="M1 1l7 7M8 1L1 8" stroke="#dcdee0" strokeWidth="1.500" /></Svg></button>
        <button type="button" aria-label="Customize" className="flex w-[27px] items-center justify-center"><Svg size="h-[14px] w-[14px]" box="0 0 14 14"><path d="M1.500 12.500L8 6" stroke="#dcdee0" strokeWidth="2.500" /><path d="M8 1.500L11 .5 9.500 3l1.500 1.500L13.500 3v3.500L10 8.500 6 7 6.500 3z" fill="#dcdee0" /></Svg></button>
        <div className="flex min-w-0 flex-1 items-center border-t border-[#5c5c5c] bg-[#dcdcdc] pl-1">
          <Svg size="h-[13px] w-4" box="0 0 16 13"><path d="M.5.500h15v11.500H.5z" stroke="#555" /><path d="M1 2h14" stroke="#555" strokeWidth="2" /><path d="M2.500 5l3 2-3 2M7 9.500h3" stroke="#444" /></Svg>
          <Caret className="ml-[2px] w-[8px] text-[#666]" />
          <input aria-label="Command" placeholder="Type a command" className="ml-[6px] h-6 min-w-0 flex-1 bg-transparent font-['DejaVu_Sans_Mono',monospace] text-[12px] italic outline-none placeholder:text-[#777]" />
        </div>
      </div>
      <div className="absolute top-0 right-0 bottom-0 w-[7px] border-r-2 border-[#58b6ea] bg-[#b2d3e8]" />
    </main>
  );
}

const sheetTab = "h-[18px] [clip-path:polygon(0_0,100%_0,calc(100%-5px)_80%,calc(100%-9px)_100%,9px_100%,5px_80%)] ";

function Toggle({ label, on, width = "w-[22px]", children }) {
  return (
    <button type="button" aria-label={label} className={"flex h-[23px] shrink-0 items-center justify-center " + width + " " + (on ? "bg-[#5288bd]" : "bg-[#323a46]")}>
      <Svg size="h-[18px] w-[18px]" box="0 0 18 18">{children}</Svg>
    </button>
  );
}

const L = "#d7dade";

function MenuArrow({ label, width }) {
  return (
    <button type="button" aria-label={label} className={"flex h-[23px] shrink-0 items-center justify-center bg-[#323a46] text-[#d7dade] " + width}>
      <Caret />
    </button>
  );
}

function StatusBar() {
  return (
    <footer className="flex h-[30px] items-start border-t border-[#333a42] border-b-2 border-b-black bg-[#222931] pr-px text-[#bfc4ca]">
      <div className="flex flex-1 gap-1 pl-3 text-[12px]">
        <button type="button" className={sheetTab + "bg-[#323b47] px-[10px]"}>Model</button>
        <button type="button" className={sheetTab + "bg-[#3b4453] px-[7px] font-bold text-white"}>Layout1</button>
        <button type="button" className={sheetTab + "bg-[#323b47] px-[9px]"}>Layout2</button>
        <button type="button" aria-label="New layout" className={sheetTab + "bg-[#323b47] px-[7px]"}><Svg size="h-[9px] w-[9px]" box="0 0 9 9"><path d="M4.500 0v9M0 4.500h9" stroke="#b7bcc2" strokeWidth="1.600" /></Svg></button>
      </div>
      <div className="flex shrink-0 items-center gap-[2px] pt-[2px] text-[12px] text-[#e4e7ea]">
        <span className="w-[150px] bg-[#343d4a] pr-[5px] text-right leading-[23px] whitespace-nowrap">2030.72, 888.82, 0.00</span>
        <button type="button" className="w-[50px] bg-[#343d4a] text-center leading-[23px]">MODEL</button>
        <Toggle label="Dynamic input" on><path d="M4.500 1v8M0.500 5h8" stroke="#fff" strokeWidth="1.300" /><path d="M6 11h10v4H6z" fill="#fff" /></Toggle>
        <Toggle label="Ortho"><path d="M2.500 2v13.500H17M2.500 10.500h5v5" stroke={L} strokeWidth="1.300" /></Toggle>
        <Toggle label="Polar" on><circle cx="8" cy="9.500" r="6.500" stroke="#fff" strokeWidth="1.300" /><path d="M18 9.500H8l7-8M12 9.500q0-3-2-3" stroke="#fff" strokeWidth="1.300" /></Toggle>
        <MenuArrow label="Polar menu" width="w-4" />
        <Toggle label="Isometric"><path d="M2 2l14 14" stroke="#c46464" strokeWidth="1.300" /><path d="M9 0v18" stroke="#56b866" strokeWidth="1.300" /><circle cx="9" cy="9" r="1.200" fill="#fff" /></Toggle>
        <MenuArrow label="Isometric menu" width="w-3" />
        <Toggle label="Object tracking" on><path d="M1.500 14.500L13 3M1 14.500h16M8 8.500l4 3" stroke="#fff" strokeWidth="1.300" /></Toggle>
        <Toggle label="Object snap" on><path d="M3 4h12v11H3z" stroke="#fff" strokeWidth="1.300" /></Toggle>
        <Toggle label="Lineweight" width="ml-[14px] w-[22px]"><path d="M3 4h12M3 8h9M3 12h12M3 15h9" stroke={L} strokeWidth="2" /></Toggle>
        <Toggle label="Settings" width="w-[28px]"><circle cx="9" cy="9" r="4.500" stroke={L} strokeWidth="3" /><circle cx="9" cy="9" r="7" stroke={L} strokeWidth="2" strokeDasharray="2.500 3" /></Toggle>
        <Toggle label="Annotation scale" width="ml-[14px] w-[24px]"><path d="M9 3v12M3 9h12" stroke={L} strokeWidth="1.300" /></Toggle>
        <Toggle label="Annotation"><path d="M9 4l6 11H3z" stroke={L} /></Toggle>
        <Toggle label="Isolate" width="w-[28px]"><path d="M2 7h6v7H2zM10 7h6v7h-6z" fill={L} /></Toggle>
        <Toggle label="Lock menu" width="w-5"><path d="M8 9h8v6H8z" fill={L} /><path d="M10 9V6h4v3M2 3h5v4" stroke={L} /></Toggle>
        <Toggle label="Lock" on><path d="M8 8h8v7H8z" fill="#fff" /><path d="M10 8V5h4v3M1 8q2 5 6 5" stroke="#fff" strokeWidth="1.300" /></Toggle>
        <Toggle label="Hardware" width="w-6"><path d="M3 3v9M0 6h14" stroke={L} /><path d="M7 5h7v7H7z" fill="#2f67a8" /><path d="M1 11h5v5H1z" fill="#c89134" /><path d="M8 13l3 3 6-7" stroke="#4ea052" strokeWidth="2.500" /></Toggle>
        <Toggle label="Monitor"><path d="M1 3h14v11H1z" stroke={L} /><path d="M2 11l3-5 3 4 3-5 4 4" stroke={L} /><path d="M12 8l5 9H7z" fill="#c4633a" /></Toggle>
        <Toggle label="Customization" width="ml-[6px] w-[22px]"><path d="M0 3.500h17M0 9h17M0 15h17" stroke="#eceef0" strokeWidth="2" /></Toggle>
      </div>
    </footer>
  );
}

/* ---------- overlays ---------- */

function Watermark() {
  return (
    <svg viewBox="0 0 340 190" className="pointer-events-none absolute right-0 bottom-0 h-[190px] w-[340px]" fill="none" role="img" aria-label="thaco.ir">
      <defs>
        <filter id="rough" x="-10%" y="-10%" width="120%" height="120%">
          <feTurbulence type="fractalNoise" baseFrequency=".3" numOctaves="2" seed="4" result="n" />
          <feColorMatrix in="n" type="matrix" values="0 0 0 0 0  0 0 0 0 0  0 0 0 0 0  0 12 0 0 -3.800" result="holes" />
          <feDisplacementMap in="SourceGraphic" in2="n" scale="3" xChannelSelector="R" yChannelSelector="B" result="edge" />
          <feComposite in="edge" in2="holes" operator="in" />
        </filter>
        <filter id="rag" x="-10%" y="-20%" width="120%" height="140%">
          <feTurbulence type="fractalNoise" baseFrequency=".3" numOctaves="1" seed="2" />
          <feDisplacementMap in="SourceGraphic" scale="3" />
        </filter>
        <filter id="haze" x="-20%" y="-200%" width="140%" height="500%"><feGaussianBlur stdDeviation="7" /></filter>
        <path id="arcTop" d="M163 101A60 60 0 0 1 282 93" />
        <path id="arcLow" d="M187 147A64.500 64.500 0 0 0 286 90" />
      </defs>
      <path d="M20 146h230v20H20z" fill="#555" opacity=".3" filter="url(#haze)" />
      <text x="14" y="178" fontFamily="Open Sans" fontWeight="800" fontSize="76" fill="#6d6c6a">thaco</text>
      <rect x="261" y="119" width="51" height="68" rx="6" stroke="#6d6d6d" strokeWidth="2.500" fill="#777" fillOpacity=".3" />
      <g opacity=".85">
        <g filter="url(#rough)" stroke="#b8373b">
          <circle cx="222" cy="93" r="74" strokeWidth="11" />
          <circle cx="222" cy="93" r="53" strokeWidth="2.500" />
          <circle cx="222" cy="93" r="48.500" strokeWidth="2.500" />
        </g>
        <text fontFamily="Liberation Sans" fontWeight="700" fontSize="7" fill="#b8373b"><textPath href="#arcTop">WP CONTENT COPY PROTECTION PLUGIN</textPath></text>
        <g transform="rotate(-16.500 222 89)">
          <rect x="135" y="78" width="174" height="22" rx="10" fill="#b84347" filter="url(#rag)" />
          <text x="222" y="95" textAnchor="middle" fontFamily="Liberation Sans" fontWeight="700" fontSize="17" fill="#efb3b3">PROTECTED IMAGE</text>
        </g>
      </g>
      <text fontFamily="Roboto" fontWeight="700" fontSize="8" fill="#fbb7b5"><textPath href="#arcLow" startOffset="3">My Website Name &amp; URL Here</textPath></text>
      <text x="277" y="165" fontFamily="Open Sans" fontWeight="800" fontSize="27" fill="#fff">ir</text>
    </svg>
  );
}

export default function App() {
  return (
    <div className={"relative flex h-screen min-w-0 flex-col overflow-hidden bg-[#222931] " + ui}>
      <header className="flex h-[44px] shrink-0 bg-[#222931]">
        <AppButton />
        <div className="flex min-w-0 flex-1 flex-col pl-[5px]">
          <TitleBar />
          <MenuTabs />
        </div>
      </header>
      <Ribbon />
      <FileTabs />
      <Workspace />
      <StatusBar />
      <ViewDialog />
      <svg viewBox="0 0 13 20" className="pointer-events-none absolute top-[401px] left-[840px] h-[20px] w-[13px]" aria-hidden="true">
        <path d="M.7.8v15.500l3.600-3.400 2.400 5.600 2.400-1-2.400-5.500h5z" fill="#fff" stroke="#111" />
      </svg>
      <Watermark />
    </div>
  );
}
